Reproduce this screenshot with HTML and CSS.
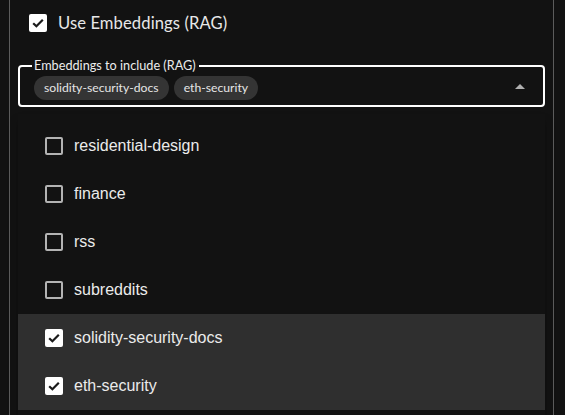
FILE: index.html
```html
<!DOCTYPE html>
<html>
<head>
<meta charset="utf-8">
<link rel="stylesheet" href="styles.css">
</head>
<body>
<div class="panel">
  <label class="use-row">
    <span class="cb cb-on">
      <svg viewBox="0 0 18 18" width="18" height="18"><path d="M4.2 9.2 L7.4 12.3 L13.8 5.8" fill="none" stroke="#1a1a1a" stroke-width="2.2"/></svg>
    </span>
    <span class="use-text">Use Embeddings (RAG)</span>
  </label>
  <div class="field">
    <fieldset class="outline"><legend>Embeddings to include (RAG)</legend></fieldset>
    <div class="chips">
      <span class="chip">solidity-security-docs</span>
      <span class="chip">eth-security</span>
    </div>
    <svg class="arrow" viewBox="0 0 10 5" width="10" height="5"><path d="M0 5 L5 0 L10 5 Z" fill="#b0b0b0"/></svg>
  </div>
  <ul class="menu">
    <li class="item"><span class="cb cb-off"></span><span class="item-text">residential-design</span></li>
    <li class="item"><span class="cb cb-off"></span><span class="item-text">finance</span></li>
    <li class="item"><span class="cb cb-off"></span><span class="item-text">rss</span></li>
    <li class="item"><span class="cb cb-off"></span><span class="item-text">subreddits</span></li>
    <li class="item selected"><span class="cb cb-on"><svg viewBox="0 0 18 18" width="18" height="18"><path d="M4.2 9.2 L7.4 12.3 L13.8 5.8" fill="none" stroke="#1a1a1a" stroke-width="2.2"/></svg></span><span class="item-text">solidity-security-docs</span></li>
    <li class="item selected"><span class="cb cb-on"><svg viewBox="0 0 18 18" width="18" height="18"><path d="M4.2 9.2 L7.4 12.3 L13.8 5.8" fill="none" stroke="#1a1a1a" stroke-width="2.2"/></svg></span><span class="item-text">eth-security</span></li>
  </ul>
</div>
</body>
</html>
```

FILE: styles.css
```css
html, body {
  margin: 0;
  padding: 0;
  background: #121212;
  height: 100%;
  overflow: hidden;
}
.panel {
  position: relative;
  box-sizing: border-box;
  margin-left: 9px;
  width: 545px;
  height: 415px;
  border-left: 1px solid #5c5c5c;
  border-right: 1px solid #5c5c5c;
  padding: 0 8px;
  font-family: Lato, "Liberation Sans", sans-serif;
  color: #fff;
}
.use-row {
  display: flex;
  align-items: center;
  height: 18px;
  padding-top: 14px;
  padding-left: 11px;
  gap: 11px;
}
.cb {
  box-sizing: border-box;
  width: 18px;
  height: 18px;
  border-radius: 2px;
  flex: none;
  display: block;
}
.cb svg { display: block; }
.cb-on { background: #ffffff; }
.cb-off { border: 2px solid #b3b3b3; }
.use-text {
  font-size: 16.6px;
  color: #e8e8e8;
  letter-spacing: 0.1px;
}
.field {
  position: relative;
  margin-top: 34px;
  height: 41px;
}
.outline {
  position: absolute;
  inset: -7px 0 0 0;
  margin: 0;
  padding: 0 12px;
  border: 2px solid #ffffff;
  border-radius: 4px;
}
.outline legend {
  padding: 0 3px 0 2px;
  font-size: 12.7px;
  line-height: 13px;
  color: #ececec;
  margin-left: 0;
}
.chips {
  position: relative;
  display: flex;
  gap: 5px;
  padding: 10px 0 0 16px;
}
.chip {
  display: inline-block;
  height: 24px;
  line-height: 24px;
  padding: 0 10px;
  border-radius: 12px;
  background: #343434;
  font-size: 12.2px;
  color: #e6e6e6;
}
.arrow {
  position: absolute;
  right: 20px;
  top: 18px;
}
.menu {
  position: absolute;
  left: 8px;
  right: 8px;
  top: 114px;
  margin: 0;
  padding: 8px 0;
  list-style: none;
  background: #121212;
  box-shadow: 0 5px 5px -3px rgba(0,0,0,0.2), 0 8px 10px 1px rgba(0,0,0,0.14);
  font-family: "Liberation Sans", Arial, sans-serif;
}
.item {
  display: flex;
  align-items: center;
  height: 48px;
  padding-left: 27px;
  gap: 11px;
}
.item.selected { background: #2f2f2f; }
.item-text {
  font-size: 16px;
  color: #ebebeb;
}
```
